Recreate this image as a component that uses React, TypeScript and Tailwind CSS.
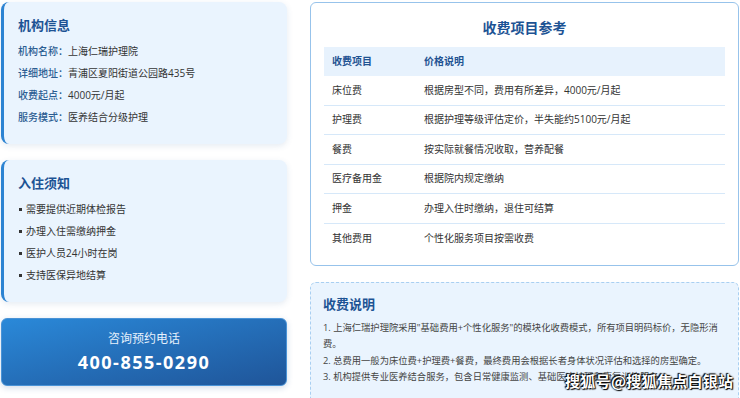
import React from 'react';

const orgInfo = [
  { label: '机构名称：', value: '上海仁瑞护理院' },
  { label: '详细地址：', value: '青浦区夏阳街道公园路435号' },
  { label: '收费起点：', value: '4000元/月起' },
  { label: '服务模式：', value: '医养结合分级护理' },
];

const notices = ['需要提供近期体检报告', '办理入住需缴纳押金', '医护人员24小时在岗', '支持医保异地结算'];

const fees = [
  { item: '床位费', desc: '根据房型不同，费用有所差异，4000元/月起' },
  { item: '护理费', desc: '根据护理等级评估定价，半失能约5100元/月起' },
  { item: '餐费', desc: '按实际就餐情况收取，营养配餐' },
  { item: '医疗备用金', desc: '根据院内规定缴纳' },
  { item: '押金', desc: '办理入住时缴纳，退住可结算' },
  { item: '其他费用', desc: '个性化服务项目按需收费' },
];

const notes = [
  '1. 上海仁瑞护理院采用"基础费用+个性化服务"的模块化收费模式，所有项目明码标价，无隐形消费。',
  '2. 总费用一般为床位费+护理费+餐费，最终费用会根据长者身体状况评估和选择的房型确定。',
  '3. 机构提供专业医养结合服务，包含日常健康监测、基础医疗护理和康复训练服务。',
];

const font = { fontFamily: '"Open Sans", "Noto Sans CJK SC", sans-serif' };

const SideCard: React.FC<{ title: string; children: React.ReactNode }> = ({ title, children }) => (
  <div className="rounded-lg border-l-[3px] border-[#2c83d2] bg-[#eaf4fe] pl-[14px] pr-3 pt-[14px] pb-[16px] shadow-[0_2px_6px_rgba(40,90,150,0.12)]">
    <h2 className="text-[13px] leading-[18px] font-bold text-[#1d5394]">{title}</h2>
    <div className="mt-[6px]">{children}</div>
  </div>
);

const App: React.FC = () => {
  return (
    <div className="relative w-[740px] h-[398px] overflow-hidden bg-white" style={font}>
      <div className="flex pt-[2px]">
        <div className="ml-[1px] w-[286px] flex flex-col gap-[16px]">
          <SideCard title="机构信息">
            {orgInfo.map((r, i) => (
              <div key={i} className="h-[22px] flex items-center text-[10px]">
                <span className="text-[#2b5d92] font-medium">{r.label}</span>
                <span className="text-[#333]">{r.value}</span>
              </div>
            ))}
          </SideCard>

          <SideCard title="入住须知">
            {notices.map((n, i) => (
              <div key={i} className="h-[22px] flex items-center text-[10px] text-[#333]">
                <span className="w-[3px] h-[3px] bg-[#333] mr-[4px] ml-[1px]" />
                {n}
              </div>
            ))}
          </SideCard>

          <div className="h-[68px] rounded-md border border-[#4a93d6] bg-gradient-to-br from-[#2a89d9] to-[#1f5599] flex flex-col items-center justify-center text-white shadow-[0_2px_6px_rgba(30,80,150,0.2)]">
            <div className="text-[12px] leading-[16px] text-[#e6f1fc]">咨询预约电话</div>
            <div className="mt-[4px] text-[18px] leading-[22px] font-bold tracking-[1.5px]">400-855-0290</div>
          </div>
        </div>

        <div className="ml-[23px] w-[429px] flex flex-col gap-[16px]">
          <div className="h-[264px] rounded-md border border-[#97c3eb] bg-white px-[13px] pt-[15px]">
            <h2 className="text-center text-[14px] leading-[20px] font-bold text-[#1d5394]">收费项目参考</h2>
            <div className="mt-[9px] text-[10px]">
              <div className="h-[29px] flex items-center bg-[#e7f2fd] font-bold text-[#1f5392]">
                <span className="w-[100px] pl-[8px]">收费项目</span>
                <span>价格说明</span>
              </div>
              {fees.map((f, i) => (
                <div
                  key={i}
                  className={`h-[29.5px] flex items-center text-[#333] ${i < fees.length - 1 ? 'border-b border-[#d6e8f9]' : ''}`}
                >
                  <span className="w-[100px] pl-[8px]">{f.item}</span>
                  <span>{f.desc}</span>
                </div>
              ))}
            </div>
          </div>

          <div className="h-[140px] rounded-md border border-dashed border-[#a9cff1] bg-[#eaf4fe] px-[12px] pt-[12px]">
            <h2 className="text-[13px] leading-[18px] font-bold text-[#1d5394]">收费说明</h2>
            <div className="mt-[7px] text-[9.3px] leading-[16.4px] text-[#444] pr-[4px]">
              {notes.map((n, i) => (
                <p key={i}>{n}</p>
              ))}
            </div>
          </div>
        </div>
      </div>

      <div
        className="absolute left-[565px] top-[371px] text-[15px] leading-[20px] font-bold text-white tracking-[0.3px]"
        style={{ fontFamily: '"Noto Sans CJK SC", sans-serif', textShadow: '0 0 2px #000, 1px 1px 1px #000, -1px -1px 1px #000' }}
      >
        搜狐号@搜狐焦点白银站
      </div>
    </div>
  );
};

export default App;
